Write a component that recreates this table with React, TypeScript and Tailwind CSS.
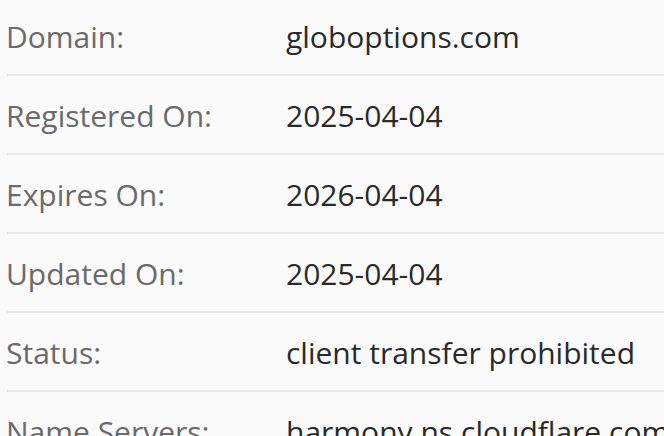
import React from "react";

const rows: [string, string][] = [
  ["Domain:", "globoptions.com"],
  ["Registered On:", "2025-04-04"],
  ["Expires On:", "2026-04-04"],
  ["Updated On:", "2025-04-04"],
  ["Status:", "client transfer prohibited"],
  ["Name Servers:", "harmony.ns.cloudflare.com"],
];

export default function App() {
  return (
    <div
      className="w-[664px] h-[436px] overflow-hidden bg-[#fafafa]"
      style={{ fontFamily: '"Open Sans", sans-serif' }}
    >
      <div className="ml-[7px] -mt-[3px]">
        {rows.map(([label, value]) => (
          <div
            key={label}
            className="flex items-start pt-[19px] pb-[17px] border-b-2 border-[#e8e8e8] text-[30px] leading-[41px] whitespace-nowrap"
          >
            <div className="w-[280px] shrink-0 -ml-[1px] text-[#6a6a6a]">{label}</div>
            <div className="text-[#2a2a2a]">{value}</div>
          </div>
        ))}
      </div>
    </div>
  );
}
